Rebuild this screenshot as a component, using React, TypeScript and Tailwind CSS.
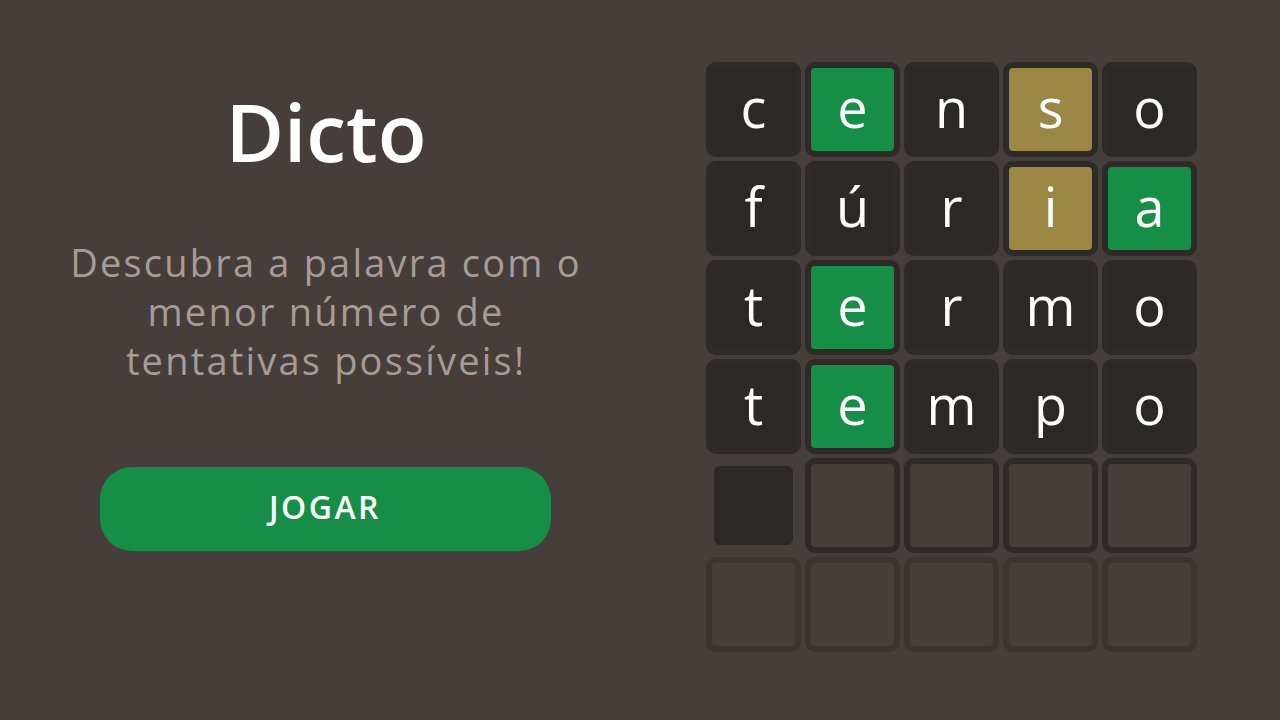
import React from 'react';

type State = 'absent' | 'correct' | 'present' | 'empty' | 'edit' | 'cursor';

const rows: { l: string; s: State }[][] = [
  [
    { l: 'c', s: 'absent' },
    { l: 'e', s: 'correct' },
    { l: 'n', s: 'absent' },
    { l: 's', s: 'present' },
    { l: 'o', s: 'absent' },
  ],
  [
    { l: 'f', s: 'absent' },
    { l: 'ú', s: 'absent' },
    { l: 'r', s: 'absent' },
    { l: 'i', s: 'present' },
    { l: 'a', s: 'correct' },
  ],
  [
    { l: 't', s: 'absent' },
    { l: 'e', s: 'correct' },
    { l: 'r', s: 'absent' },
    { l: 'm', s: 'absent' },
    { l: 'o', s: 'absent' },
  ],
  [
    { l: 't', s: 'absent' },
    { l: 'e', s: 'correct' },
    { l: 'm', s: 'absent' },
    { l: 'p', s: 'absent' },
    { l: 'o', s: 'absent' },
  ],
  [
    { l: '', s: 'cursor' },
    { l: '', s: 'edit' },
    { l: '', s: 'edit' },
    { l: '', s: 'edit' },
    { l: '', s: 'edit' },
  ],
  [
    { l: '', s: 'empty' },
    { l: '', s: 'empty' },
    { l: '', s: 'empty' },
    { l: '', s: 'empty' },
    { l: '', s: 'empty' },
  ],
];

const tileClass: Record<State, string> = {
  absent: 'border-[6px] border-[#2e2a27] bg-[#2c2825]',
  correct: 'border-[6px] border-[#2e2a27] bg-[#168e48]',
  present: 'border-[6px] border-[#2e2a27] bg-[#998743]',
  edit: 'border-[6px] border-[#2e2a27]',
  empty: 'border-[6px] border-[#3b3531]',
  cursor: 'border-[8px] border-[#463e3a] bg-[#2c2825] rounded-[14px]',
};

const Tile: React.FC<{ l: string; s: State }> = ({ l, s }) => (
  <div
    className={`w-[95px] h-[95px] rounded-[10px] flex items-center justify-center text-white text-[54px] font-medium leading-none pb-[6px] ${tileClass[s]}`}
  >
    {l}
  </div>
);

export default function App() {
  return (
    <div
      className="w-[1280px] h-[720px] bg-[#463e3a] flex items-start"
      style={{ fontFamily: '"Open Sans", "Noto Sans", sans-serif' }}
    >
      <div className="w-[652px] flex flex-col items-center pt-[91px]">
        <h1 className="text-white text-[80px] font-semibold leading-none">Dicto</h1>
        <p className="mt-[67px] text-[#a59c97] text-[38px] leading-[49px] text-center tracking-[2.2px] whitespace-nowrap">
          Descubra a palavra com o
          <br />
          menor número de
          <br />
          tentativas possíveis!
        </p>
        <button className="mt-[82px] ml-[-2px] w-[451px] h-[84px] rounded-[32px] bg-[#168e48] text-white text-[32px] font-semibold tracking-[2.5px] pb-[4px]">
          JOGAR
        </button>
      </div>
      <div className="ml-[54px] mt-[62px] grid grid-cols-5 gap-[4px]">
        {rows.flat().map((t, i) => (
          <Tile key={i} l={t.l} s={t.s} />
        ))}
      </div>
    </div>
  );
}
